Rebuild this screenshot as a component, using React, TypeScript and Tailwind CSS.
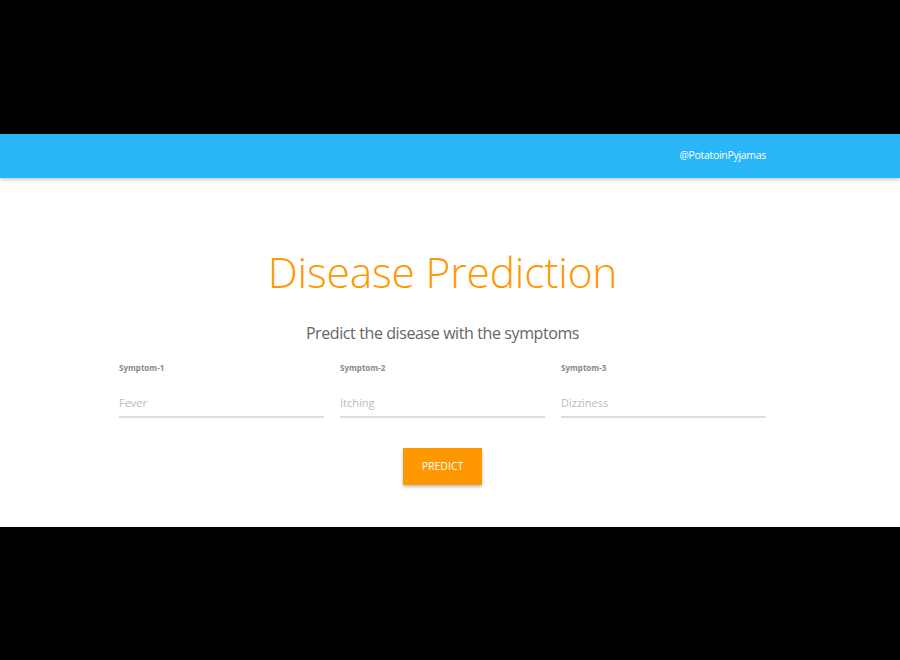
const symptoms = [
  { label: "Symptom-1", placeholder: "Fever" },
  { label: "Symptom-2", placeholder: "Itching" },
  { label: "Symptom-3", placeholder: "Dizziness" },
]

const App = () => {
  return (
    <div className="h-[660px] w-[900px] bg-black overflow-hidden" style={{ fontFamily: '"Open Sans", "Noto Sans", sans-serif' }}>
      <div className="h-[134px]" />
      <div className="w-full bg-white">
        <nav className="h-[44px] bg-[#29b6f6] shadow-[0_2px_3px_rgba(0,0,0,0.2)] relative">
          <div className="w-[885px] h-full">
            <div className="mx-auto w-[647px] h-full flex items-center justify-end">
              <span className="text-[10.5px] text-white tracking-[-0.3px]">@PotatoinPyjamas</span>
            </div>
          </div>
        </nav>
        <main className="h-[349px] pt-[66px]">
          <div className="w-[885px]">
            <div className="mx-auto w-[647px] flex flex-col items-center">
              <h1 className="text-[42.5px] leading-[56px] text-[#ff9800] font-light tracking-[-0.2px]">Disease Prediction</h1>
              <p className="mt-[21px] text-[16px] text-[#666] tracking-[-0.4px]">Predict the disease with the symptoms</p>
              <div className="mt-[17px] w-full grid grid-cols-3 gap-[16px]">
                {symptoms.map(s => (
                  <div key={s.label} className="flex flex-col">
                    <label className="text-[8px] font-bold text-[#888]">{s.label}</label>
                    <input
                      className="mt-[14px] h-[30px] border-b-2 border-[#ddd] text-[11px] text-[#555] placeholder:text-[#bbb] outline-none bg-transparent"
                      placeholder={s.placeholder}
                    />
                  </div>
                ))}
              </div>
              <button type="button" className="mt-[30px] w-[79px] h-[37px] bg-[#ff9800] text-white text-[10.5px] shadow-[0_2px_3px_rgba(0,0,0,0.25)]">
                PREDICT
              </button>
            </div>
          </div>
        </main>
      </div>
    </div>
  )
}

export default App
